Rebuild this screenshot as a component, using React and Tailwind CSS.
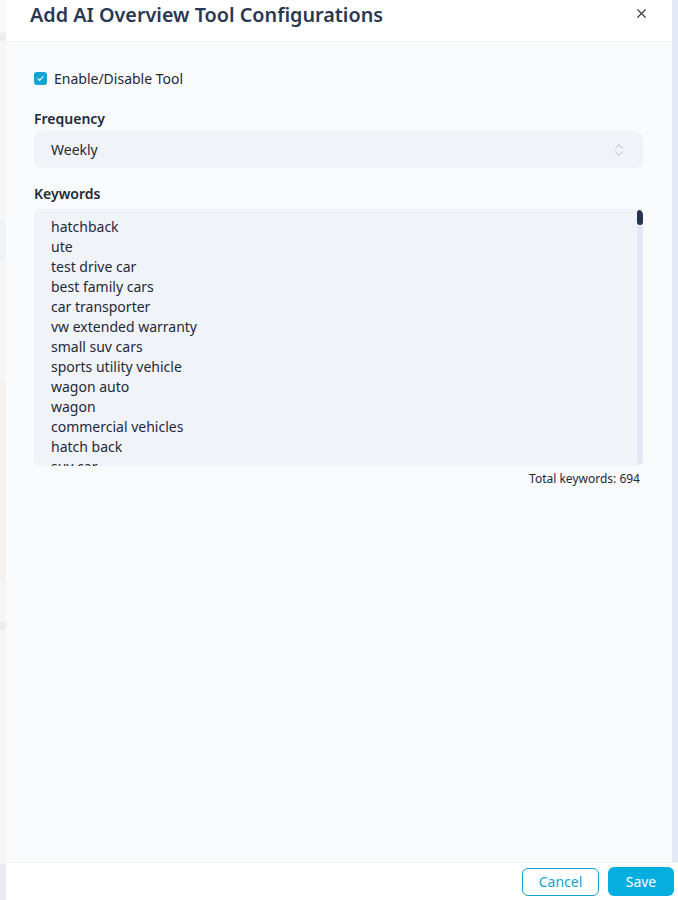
import { ChevronsUpDown, X } from 'lucide-react';

const keywords = [
  'hatchback',
  'ute',
  'test drive car',
  'best family cars',
  'car transporter',
  'vw extended warranty',
  'small suv cars',
  'sports utility vehicle',
  'wagon auto',
  'wagon',
  'commercial vehicles',
  'hatch back',
  'suv car',
];

const App = () => {
  return (
    <div className="flex h-[900px] w-[678px] overflow-hidden bg-white font-['Noto_Sans',sans-serif] text-[#1f2937]">
      {/* faded page behind the drawer */}
      <div className="flex w-[6px] flex-col bg-[#f6f6f6]">
        <div className="h-[32px] bg-[#fafafa]" />
        <div className="mt-[1px] h-[8px] bg-[#ededed]" />
        <div className="h-[180px]" />
        <div className="h-[40px] bg-[#f1f2f5]" />
        <div className="h-[120px]" />
        <div className="mt-[1px] h-[200px] bg-[#f7f1ee]" />
        <div className="h-[40px]" />
        <div className="h-[8px] bg-[#ededed]" />
        <div className="flex-1" />
        <div className="h-[36px] bg-[#ebebf6]" />
      </div>

      {/* drawer */}
      <div className="flex flex-1 flex-col">
        <div className="flex min-h-0 flex-1">
          <div className="flex flex-1 flex-col bg-[#f8fafc]">
            <div className="flex h-[42px] items-start justify-between border-b border-[#eef0f3] bg-white pl-[24px] pr-[23px]">
              <h2 className="mt-[1px] text-[19.8px] font-semibold leading-[28px] text-[#2a3852]">
                Add AI Overview Tool Configurations
              </h2>
              <X className="mt-[6px] h-[15px] w-[15px] text-[#3f3f46]" strokeWidth={1.9} />
            </div>

            <div className="flex flex-col pl-[28px] pr-[29px] pt-[26px]">
              <label className="flex items-center gap-[7px] text-[14px]">
                <span className="flex h-[13px] w-[13px] items-center justify-center rounded-[3px] bg-[#12a3d6]">
                  <svg viewBox="0 0 12 12" className="h-[9px] w-[9px]" fill="none">
                    <path d="M2.5 6.2l2.3 2.3 4.7-4.9" stroke="white" strokeWidth="1.4" strokeLinecap="round" strokeLinejoin="round" />
                  </svg>
                </span>
                Enable/Disable Tool
              </label>

              <div className="mt-[20px] text-[14px] font-semibold leading-[20px]">Frequency</div>
              <div className="mt-[2px] flex h-[37px] items-center justify-between rounded-lg bg-[#f0f3f8] pl-[17px] pr-[16px] text-[14px]">
                <span>Weekly</span>
                <ChevronsUpDown className="h-[16px] w-[16px] text-[#9fb0c8]" strokeWidth={1.3} />
              </div>

              <div className="mt-[16px] text-[14px] font-semibold leading-[20px]">Keywords</div>
              <div className="relative mt-[5px] h-[257px] overflow-hidden rounded-md bg-[#f0f3f8]">
                <div className="pl-[17px] pt-[8px] text-[14px] leading-[20px]">
                  {keywords.map((k) => (
                    <div key={k}>{k}</div>
                  ))}
                </div>
                <div className="absolute bottom-[2px] right-0 top-[1px] w-[6px] rounded-b bg-[#e2e8f4]">
                  <div className="h-[15px] rounded-full bg-[#26344f]" />
                </div>
              </div>
              <div className="mt-[4px] pr-[3px] text-right text-[12px] leading-[18px]">Total keywords: 694</div>
            </div>
          </div>
          <div className="w-[6px] bg-[#e3e9f5]" />
        </div>

        <div className="flex h-[38px] items-center justify-end gap-[9px] border-t border-[#eef0f3] bg-white pr-[4px]">
          <button className="h-[28px] w-[77px] rounded-md border border-[#12a3d6] text-[14px] text-[#12a3d6]">
            Cancel
          </button>
          <button className="h-[29px] w-[66px] rounded-md bg-[#04aedf] text-[14px] text-white">Save</button>
        </div>
      </div>
    </div>
  );
};

export default App;
